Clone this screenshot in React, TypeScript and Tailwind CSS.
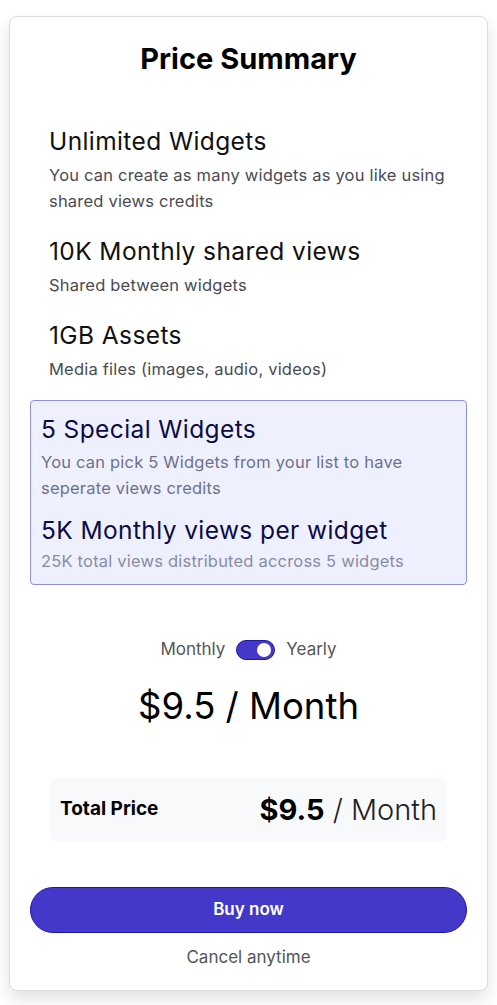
import React from "react";

const features = [
  { t: "Unlimited Widgets", d: "You can create as many widgets as you like using shared views credits" },
  { t: "10K Monthly shared views", d: "Shared between widgets" },
  { t: "1GB Assets", d: "Media files (images, audio, videos)" },
];

export default function App() {
  return (
    <div className="min-h-[1005px] w-[497px] bg-white pt-4" style={{ fontFamily: "Inter, 'Noto Sans', sans-serif" }}>
      <div className="ml-[9px] w-[479px] rounded-lg border border-[#dcdcdc] bg-white px-5 pb-[21px] pt-[24px] shadow-[0_8px_16px_rgba(0,0,0,0.12)]">
        <h1 className="text-center text-[29px] font-bold leading-[36px] text-black">Price Summary</h1>

        <div className="mt-[48px] flex flex-col gap-[21px] pl-[19px] pr-5">
          {features.map((f) => (
            <div key={f.t} className="flex flex-col gap-[5px]">
              <div className="text-[24.5px] leading-[32px] text-[#111] tracking-[0.4px]">{f.t}</div>
              <div className="text-[16.5px] leading-[26px] text-[#4a4a52] tracking-[0.2px]">{f.d}</div>
            </div>
          ))}
        </div>

        <div className="mt-[18px] flex flex-col gap-[13px] rounded border border-[#8a93dc] bg-[#eef1fd] px-[10px] pb-[10px] pt-[12px]">
          <div className="flex flex-col gap-[4px]">
            <div className="text-[24.5px] leading-[32px] text-[#0d0b45] tracking-[0.4px]">5 Special Widgets</div>
            <div className="text-[16.5px] leading-[26px] text-[#6e7189] tracking-[0.2px]">You can pick 5 Widgets from your list to have seperate views credits</div>
          </div>
          <div className="flex flex-col gap-[2px]">
            <div className="text-[24.5px] leading-[32px] text-[#0d0b45] tracking-[0.4px]">5K Monthly views per widget</div>
            <div className="text-[16.5px] leading-[26px] text-[#8a8ca3] tracking-[0.2px]">25K total views distributed accross 5 widgets</div>
          </div>
        </div>

        <div className="mt-[52px] flex items-center justify-center gap-[11px] text-[17px] text-[#555]">
          <span>Monthly</span>
          <span className="relative inline-flex h-[20px] w-[39px] items-center rounded-full border border-[#1f1aa0] bg-[#4338ca]">
            <span className="absolute right-[3px] h-[14px] w-[14px] rounded-full bg-white" />
          </span>
          <span>Yearly</span>
        </div>

        <div className="mt-[19px] text-center text-[36.5px] leading-[48px] text-black">$9.5 / Month</div>

        <div className="mx-5 mt-[48px] flex h-[64px] items-center justify-between rounded-lg bg-[#f8f9fb] pl-[10px] pr-[10px]">
          <span className="text-[19px] font-bold text-black">Total Price</span>
          <span className="text-[29px] leading-none text-black">
            <span className="font-bold">$9.5</span>
            <span className="font-light text-[#222]"> / Month</span>
          </span>
        </div>

        <button className="mt-[45px] flex h-[46px] w-full items-center justify-center rounded-full border border-[#1e17a6] bg-[#4338ca] text-[17px] font-semibold text-white">
          Buy now
        </button>

        <div className="mt-[12px] text-center text-[17px] leading-[24px] text-[#555]">Cancel anytime</div>
      </div>
    </div>
  );
}
